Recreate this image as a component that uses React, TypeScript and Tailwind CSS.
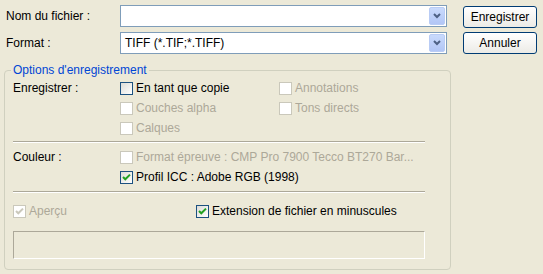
import React from "react";

const ui = "font-['Liberation_Sans',Arial,sans-serif] text-[12px] leading-[14px]";

function CheckBox({ checked, disabled }: { checked?: boolean; disabled?: boolean }) {
  return (
    <span
      className={`w-[13px] h-[13px] border shrink-0 flex items-center justify-center ${
        disabled ? "border-[#CAC8BB] bg-white" : "border-[#1C5180] bg-linear-to-br from-[#DCDCD7] to-white"
      }`}
    >
      {checked && (
        <svg width="11" height="11" viewBox="0 0 11 11">
          <path d="M2 5 L4.3 7.3 L9 2.6" fill="none" stroke={disabled ? "#CAC8BB" : "#21A121"} strokeWidth="2" />
        </svg>
      )}
    </span>
  );
}

function Option({ label, checked, disabled }: { label: string; checked?: boolean; disabled?: boolean }) {
  return (
    <div className="h-[20px] flex items-center gap-[3px]">
      <CheckBox checked={checked} disabled={disabled} />
      <span className={`whitespace-nowrap ${disabled ? "text-[#ACA899]" : "text-black"}`}>{label}</span>
    </div>
  );
}

function Combo({ value }: { value?: string }) {
  return (
    <div className="w-[327px] h-[22px] border border-[#7F9DB9] bg-white flex items-center pl-[4px] pr-[1px]">
      <span className="flex-1 text-black">{value}</span>
      <span className="w-[16px] h-[18px] rounded-[2px] border border-[#B9CCF5] bg-linear-to-b from-[#C9DAFC] to-[#B2C6F6] flex items-center justify-center">
        <svg width="8" height="6" viewBox="0 0 8 6">
          <path d="M1 1 L4 4 L7 1" fill="none" stroke="#4D6185" strokeWidth="2" />
        </svg>
      </span>
    </div>
  );
}

function Button({ label }: { label: string }) {
  return (
    <button className="w-[74px] h-[22px] border border-[#003C74] rounded-[3px] bg-linear-to-b from-white to-[#ECEBE6] text-black">
      {label}
    </button>
  );
}

function Separator() {
  return <div className="w-[412px] h-[2px] border-t border-[#ACA899] border-b border-b-white" />;
}

export default function App() {
  return (
    <div className={`w-[543px] h-[274px] bg-[#ECE9D8] overflow-hidden ${ui}`}>
      <div className="flex pt-[5px] pl-[6px]">
        <div className="flex flex-col gap-[5px]">
          <div className="flex items-center">
            <span className="w-[114px]">Nom du fichier :</span>
            <Combo />
          </div>
          <div className="flex items-center">
            <span className="w-[114px]">Format :</span>
            <Combo value="TIFF (*.TIF;*.TIFF)" />
          </div>
        </div>
        <div className="ml-[16px] pt-[1px] flex flex-col gap-[4px]">
          <Button label="Enregistrer" />
          <Button label="Annuler" />
        </div>
      </div>

      <fieldset className="ml-[4px] mt-[9px] w-[447px] border border-[#D0D0BF] rounded-[4px] pb-[10px]">
        <legend className="ml-[6px] px-[2px] text-[#0046D5]">Options d'enregistrement</legend>
        <div className="pl-[8px] pt-[1px]">
          <div className="flex">
            <span className="w-[107px] h-[20px] flex items-center">Enregistrer :</span>
            <div className="w-[159px] flex flex-col">
              <Option label="En tant que copie" />
              <Option label="Couches alpha" disabled />
              <Option label="Calques" disabled />
            </div>
            <div className="flex flex-col">
              <Option label="Annotations" disabled />
              <Option label="Tons directs" disabled />
            </div>
          </div>
          <div className="mt-[3px]">
            <Separator />
          </div>
          <div className="flex mt-[4px]">
            <span className="w-[107px] h-[20px] flex items-center">Couleur :</span>
            <div className="flex flex-col">
              <Option label="Format épreuve : CMP Pro 7900 Tecco BT270 Bar..." disabled />
              <Option label="Profil ICC : Adobe RGB (1998)" checked />
            </div>
          </div>
          <div className="mt-[4px]">
            <Separator />
          </div>
          <div className="flex mt-[8px]">
            <div className="w-[183px]">
              <Option label="Aperçu" checked disabled />
            </div>
            <Option label="Extension de fichier en minuscules" checked />
          </div>
          <div className="mt-[10px] w-[412px] h-[28px] border border-[#ACA899] border-r-white border-b-white" />
        </div>
      </fieldset>
    </div>
  );
}
